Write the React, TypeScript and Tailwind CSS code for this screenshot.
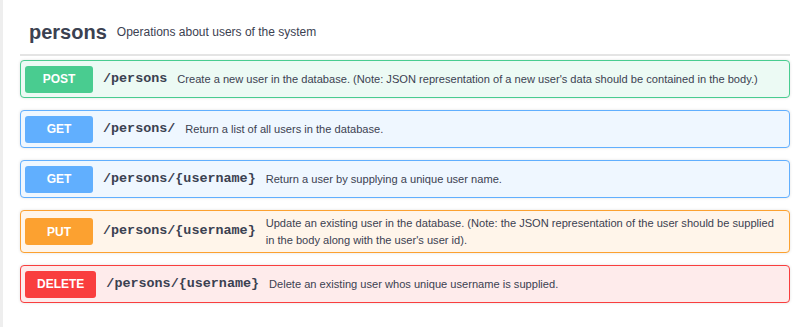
const ops = [
  {
    method: "POST",
    path: "/persons",
    summary:
      "Create a new user in the database. (Note: JSON representation of a new user's data should be contained in the body.)",
    block: "border-[#49cc90] bg-[#ecfaf4]",
    badge: "bg-[#49cc90]",
  },
  {
    method: "GET",
    path: "/persons/",
    summary: "Return a list of all users in the database.",
    block: "border-[#61affe] bg-[#eff7ff]",
    badge: "bg-[#61affe]",
  },
  {
    method: "GET",
    path: "/persons/{username}",
    summary: "Return a user by supplying a unique user name.",
    block: "border-[#61affe] bg-[#eff7ff]",
    badge: "bg-[#61affe]",
  },
  {
    method: "PUT",
    path: "/persons/{username}",
    summary:
      "Update an existing user in the database. (Note: the JSON representation of the user should be supplied in the body along with the user's user id).",
    block: "border-[#fca130] bg-[#fff5ea]",
    badge: "bg-[#fca130]",
  },
  {
    method: "DELETE",
    path: "/persons/{username}",
    summary: "Delete an existing user whos unique username is supplied.",
    block: "border-[#f93e3e] bg-[#feebeb]",
    badge: "bg-[#f93e3e]",
  },
];

export default function App() {
  return (
    <div
      className="w-[800px] h-[327px] bg-white border-l-[3px] border-[#eeeeee] pl-[17px] pr-[10px] text-[#3b4151]"
      style={{ fontFamily: '"Liberation Sans", Arial, sans-serif' }}
    >
      {/* Tag header */}
      <div className="flex items-center pt-[18px] pb-[8px] pl-[9px] border-b-2 border-[#e4e4e4]">
        <h4 className="text-[20px] leading-[28px] font-bold">persons</h4>
        <span className="ml-[10px] text-[12px] text-[#3b4151]">
          Operations about users of the system
        </span>
      </div>

      {/* Operations */}
      <div className="mt-[4px] flex flex-col gap-[12px]">
        {ops.map((op, idx) => (
          <div
            key={idx}
            className={`flex items-center min-h-[38px] border rounded-[4px] px-[4px] py-[4px] shadow-[0_0_3px_rgba(0,0,0,0.12)] ${op.block}`}
          >
            <span
              className={`shrink-0 min-w-[68px] h-[27px] px-[12px] rounded-[3px] flex items-center justify-center text-white text-[12px] font-bold ${op.badge}`}
            >
              {op.method}
            </span>
            <span
              className="shrink-0 px-[10px] text-[13.4px] font-bold text-[#3b4151]"
              style={{ fontFamily: '"Liberation Mono", "Courier New", monospace' }}
            >
              {op.path}
            </span>
            <span className="flex-1 pr-[10px] text-[11.1px] leading-[16.5px] text-[#3b4151]">
              {op.summary}
            </span>
          </div>
        ))}
      </div>
    </div>
  );
}
